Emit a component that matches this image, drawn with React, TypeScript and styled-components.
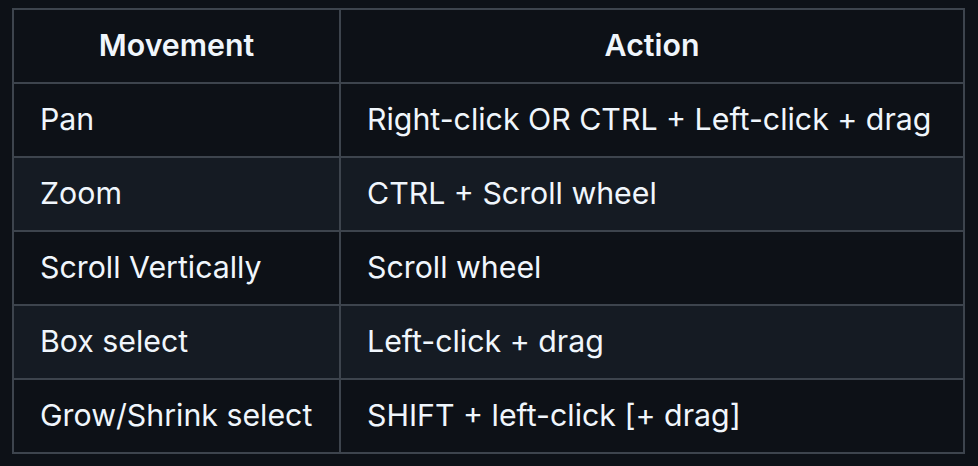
import React from "react";
import styled, { createGlobalStyle } from "styled-components";

const GlobalStyle = createGlobalStyle`
  html, body {
    margin: 0;
    padding: 0;
    background: #0d1117;
  }
  body {
    font-family: Inter, "Noto Sans", "Liberation Sans", sans-serif;
    color: #f0f6fc;
  }
`;

const Page = styled.div`
  padding: 8px 12px;
  background: #0d1117;
  min-height: 466px;
  box-sizing: border-box;
`;

const Table = styled.table`
  border-collapse: collapse;
  border-spacing: 0;
  table-layout: fixed;
  width: 953px;
  font-size: 30.3px;
  line-height: 1.5;
`;

const Row = styled.tr<{ $alt?: boolean }>`
  background: ${(p) => (p.$alt ? "#151b23" : "#0d1117")};
`;

const HeadCell = styled.th<{ $w?: number }>`
  border: 2px solid #3d444d;
  height: 74px;
  padding: 0 26px;
  box-sizing: border-box;
  font-weight: 600;
  text-align: center;
  vertical-align: middle;
  width: ${(p) => (p.$w ? `${p.$w}px` : "auto")};
`;

const Cell = styled.td`
  border: 2px solid #3d444d;
  height: 74px;
  padding: 0 26px;
  box-sizing: border-box;
  text-align: left;
  vertical-align: middle;
  white-space: nowrap;
`;

const rows: [string, string][] = [
  ["Pan", "Right-click OR CTRL + Left-click + drag"],
  ["Zoom", "CTRL + Scroll wheel"],
  ["Scroll Vertically", "Scroll wheel"],
  ["Box select", "Left-click + drag"],
  ["Grow/Shrink select", "SHIFT + left-click [+ drag]"],
];

export default function App() {
  return (
    <>
      <GlobalStyle />
      <Page>
        <Table>
          <thead>
            <Row>
              <HeadCell $w={327}>Movement</HeadCell>
              <HeadCell>Action</HeadCell>
            </Row>
          </thead>
          <tbody>
            {rows.map(([m, a], i) => (
              <Row key={m} $alt={i % 2 === 1}>
                <Cell>{m}</Cell>
                <Cell>{a}</Cell>
              </Row>
            ))}
          </tbody>
        </Table>
      </Page>
    </>
  );
}
